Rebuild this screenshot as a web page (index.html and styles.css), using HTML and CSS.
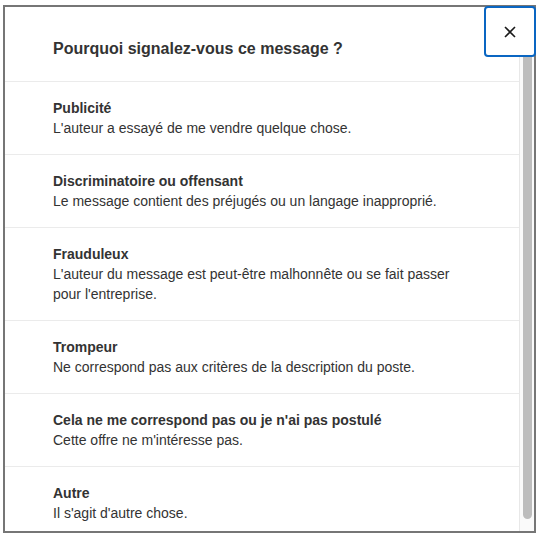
FILE: index.html
```html
<!DOCTYPE html>
<html lang="fr">
<head>
  <meta charset="UTF-8">
  <meta name="viewport" content="width=device-width, initial-scale=1.0">
  <title>Signaler ce message</title>
  <link rel="stylesheet" href="styles.css">
</head>
<body>
  <div class="modal">
    <button class="modal__close" type="button" aria-label="Fermer">
      <svg width="12" height="12" viewBox="0 0 12 12">
        <path d="M1 1 L11 11 M11 1 L1 11" stroke="#1a1a1a" stroke-width="1.6" fill="none"/>
      </svg>
    </button>
    <div class="modal__body">
      <div class="modal__header">
        <h2>Pourquoi signalez-vous ce message ?</h2>
      </div>
      <ul class="reasons">
        <li class="reason">
          <h3>Publicité</h3>
          <p>L'auteur a essayé de me vendre quelque chose.</p>
        </li>
        <li class="reason">
          <h3>Discriminatoire ou offensant</h3>
          <p>Le message contient des préjugés ou un langage inapproprié.</p>
        </li>
        <li class="reason">
          <h3>Frauduleux</h3>
          <p>L'auteur du message est peut-être malhonnête ou se fait passer pour l'entreprise.</p>
        </li>
        <li class="reason">
          <h3>Trompeur</h3>
          <p>Ne correspond pas aux critères de la description du poste.</p>
        </li>
        <li class="reason">
          <h3>Cela ne me correspond pas ou je n'ai pas postulé</h3>
          <p>Cette offre ne m'intéresse pas.</p>
        </li>
        <li class="reason">
          <h3>Autre</h3>
          <p>Il s'agit d'autre chose.</p>
        </li>
      </ul>
    </div>
    <!-- always-visible scroll track -->
    <div class="scrollbar">
      <div class="scrollbar__thumb"></div>
    </div>
  </div>
</body>
</html>
```

FILE: styles.css
```css
body {
  margin: 0;
  background-color: #fff;
  font-family: "Liberation Sans", Arial, sans-serif;
  color: #333;
}

* {
  margin: 0;
  padding: 0;
  box-sizing: border-box;
}

.modal {
  position: relative;
  display: flex;
  width: 533px;
  height: 528px;
  margin: 5px 0 0 3px;
  border: 2px solid #767676;
  background-color: #fff;
}

.modal__body {
  flex: 1;
  height: 100%;
  overflow: hidden;
}

.scrollbar {
  flex: 0 0 15px;
  display: flex;
  padding: 3px 2px 12px 3px;
  background-color: #fafafa;
  border-left: 1px solid #e8e8e8;
}

.scrollbar__thumb {
  flex: 1;
  background-color: #bdbdbd;
  border-radius: 5px;
}

.modal__close {
  position: absolute;
  top: -1px;
  right: -2px;
  z-index: 2;
  display: flex;
  justify-content: center;
  align-items: center;
  width: 52px;
  height: 51px;
  background-color: #fff;
  border: 2px solid #0a66c2;
  border-radius: 4px;
  cursor: pointer;
}

.modal__header {
  padding: 30px 48px 20px;
  border-bottom: 1px solid #ebebeb;
}

.modal__header h2 {
  font-size: 16px;
  line-height: 24px;
  font-weight: 700;
}

.reasons {
  list-style: none;
}

.reason {
  padding: 16px 50px 16px 48px;
  border-bottom: 1px solid #ebebeb;
  font-size: 14px;
  line-height: 20px;
  cursor: pointer;
}

.reason h3 {
  font-size: 14px;
  font-weight: 700;
}

.reason p {
  font-weight: 400;
}
```
